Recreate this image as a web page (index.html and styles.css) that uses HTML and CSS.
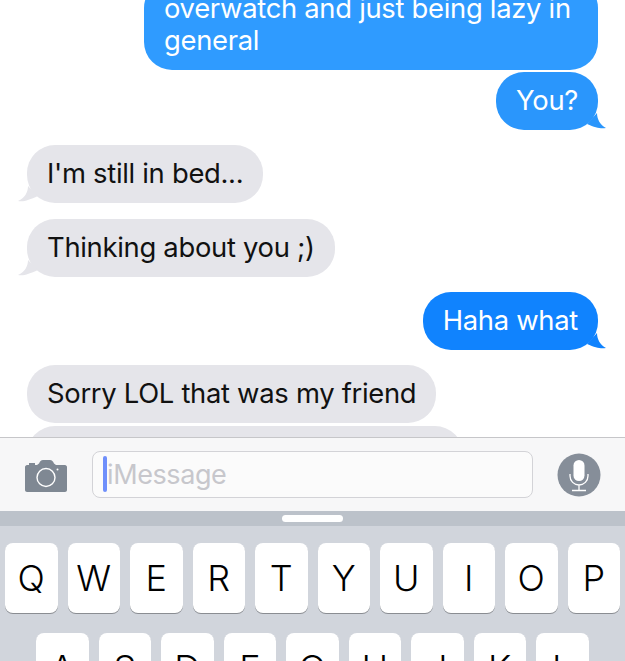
FILE: index.html
```html
<!DOCTYPE html>
<html lang="en">
<head>
  <meta charset="UTF-8">
  <meta name="viewport" content="width=device-width, initial-scale=1.0">
  <title>Messages</title>
  <link rel="stylesheet" href="styles.css">
</head>
<body>
  <div class="screen">
    <div class="thread">
      <div class="bubble sent first">overwatch and just being lazy in general</div>
      <div class="bubble sent you">You?
        <svg class="tail tail-right" width="22" height="18" viewBox="0 0 22 18"><path d="M11 0 C11 6 14 12 20 15 C15 16 10 15 1 11 Z"/></svg>
      </div>
      <div class="bubble received gap-big">I'm still in bed...
        <svg class="tail tail-left" width="22" height="18" viewBox="0 0 22 18"><path d="M10 0 C10 6 7 12 0 15 C6 16 11 14 20 10 Z"/></svg>
      </div>
      <div class="bubble received gap-big thinking">Thinking about you ;)
        <svg class="tail tail-left" width="22" height="18" viewBox="0 0 22 18"><path d="M10 0 C10 6 7 12 0 15 C6 16 11 14 20 10 Z"/></svg>
      </div>
      <div class="bubble sent haha gap-big">Haha what
        <svg class="tail tail-right" width="22" height="18" viewBox="0 0 22 18"><path d="M11 0 C11 6 14 12 20 15 C15 16 10 15 1 11 Z"/></svg>
      </div>
      <div class="bubble received gap-big">Sorry LOL that was my friend</div>
      <div class="bubble received cut"></div>
    </div>

    <div class="composer">
      <svg class="camera" width="42" height="32" viewBox="0 0 42 32">
        <path fill="#7f8893" d="M4 3h6v2H4z"/>
        <path fill="#7f8893" fill-rule="evenodd" d="M2 5h10l2-1.500C15 1.500 16 0 18 0h7c2 0 3 1.500 4 3.500L31 5h9c1 0 2 1 2 2v23c0 1-1 2-2 2H2c-1 0-2-1-2-2V7c0-1 1-2 2-2Z"/>
        <circle cx="21" cy="17.500" r="9" fill="none" stroke="#fff" stroke-width="1.400"/>
        <circle cx="32.500" cy="9.500" r="1" fill="#fff"/>
      </svg>
      <div class="input">
        <span class="caret"></span>
        <span class="placeholder">iMessage</span>
      </div>
      <svg class="mic" width="44" height="44" viewBox="0 0 44 44">
        <circle cx="22" cy="22" r="21.500" fill="#868e99"/>
        <rect x="16.500" y="7" width="11" height="21" rx="5.500" fill="#fff"/>
        <path d="M13 21v2a9 9 0 0 0 18 0v-2M22 32v5M15 37.500h14" fill="none" stroke="#fff" stroke-width="1.300"/>
      </svg>
    </div>

    <div class="keyboard">
      <div class="strip"><span class="handle"></span></div>
      <div class="keys">
        <div class="row">
          <span class="key">Q</span><span class="key">W</span><span class="key">E</span><span class="key">R</span><span class="key">T</span><span class="key">Y</span><span class="key">U</span><span class="key">I</span><span class="key">O</span><span class="key">P</span>
        </div>
        <div class="row row-two">
          <span class="key">A</span><span class="key">S</span><span class="key">D</span><span class="key">F</span><span class="key">G</span><span class="key">H</span><span class="key">J</span><span class="key">K</span><span class="key">L</span>
        </div>
      </div>
    </div>
  </div>
</body>
</html>
```

FILE: styles.css
```css
* {
  box-sizing: border-box;
}

html, body {
  margin: 0;
  height: 100%;
  overflow: hidden;
  background-color: #fff;
}

.screen {
  display: flex;
  flex-direction: column;
  width: 625px;
  height: 661px;
  overflow: hidden;
  font-family: Inter, "Liberation Sans", sans-serif;
}

.thread {
  display: flex;
  flex-direction: column;
  flex: none;
  height: 437px;
  padding: 0 27px;
  overflow: hidden;
}

.bubble {
  position: relative;
  flex: none;
  padding: 12px 20px 14px;
  border-radius: 28px;
  font-size: 27.400px;
  line-height: 32px;
  letter-spacing: -0.3px;
  white-space: nowrap;
}

.sent {
  align-self: flex-end;
  color: #fff;
}

.received {
  align-self: flex-start;
  color: #111;
  background-color: #e5e5ea;
}

.gap-big {
  margin-top: 15px;
}

.thinking {
  margin-top: 16px;
}

.first {
  width: 454px;
  margin-top: -20px;
  white-space: normal;
  background-color: #2f9bff;
}

.you {
  margin-top: 2px;
  background-color: #2a96fc;
}

.you .tail {
  fill: #2a96fc;
}

.haha {
  background-color: #1083fe;
}

.haha .tail {
  fill: #1083fe;
}

.cut {
  width: 436px;
  height: 58px;
  margin-top: 3px;
}

.tail {
  position: absolute;
  bottom: -1px;
}

.tail-right {
  right: -10px;
}

.tail-left {
  left: -9px;
  fill: #e5e5ea;
}

.composer {
  display: flex;
  align-items: center;
  flex: none;
  height: 74px;
  padding: 0 24px 0 25px;
  background-color: #f7f7f8;
  border-top: 1px solid #c6c6c9;
}

.camera {
  flex: none;
  margin-top: 3px;
}

.input {
  position: relative;
  display: flex;
  align-items: center;
  flex: none;
  width: 441px;
  height: 47px;
  margin-left: 25px;
  padding-left: 14px;
  background-color: #fbfbfb;
  border: 1px solid #d3d3d7;
  border-radius: 8px;
}

.placeholder {
  font-size: 27px;
  letter-spacing: -0.4px;
  color: #c7c7cc;
}

.caret {
  position: absolute;
  left: 10px;
  top: 4px;
  width: 4px;
  height: 36px;
  border-radius: 2px;
  background-color: #6f8ffb;
}

.mic {
  flex: none;
  margin-left: 24px;
}

.keyboard {
  flex: 1;
  background-color: #d1d5dc;
}

.strip {
  display: flex;
  justify-content: center;
  height: 15px;
  padding-top: 4px;
  background-color: #bcc2ca;
}

.handle {
  width: 61px;
  height: 7px;
  border-radius: 4px;
  background-color: #fff;
}

.keys {
  padding: 17px 5px 0;
}

.row {
  display: flex;
  gap: 10px;
  margin-bottom: 20px;
}

.row-two {
  padding-left: 31px;
}

.key {
  display: flex;
  align-items: center;
  justify-content: center;
  flex: none;
  width: 52.500px;
  height: 70px;
  background-color: #fff;
  border-radius: 8px;
  box-shadow: 0 1px 0 #8a8d92;
  font-size: 36px;
  font-weight: 350;
  color: #000;
}
```
